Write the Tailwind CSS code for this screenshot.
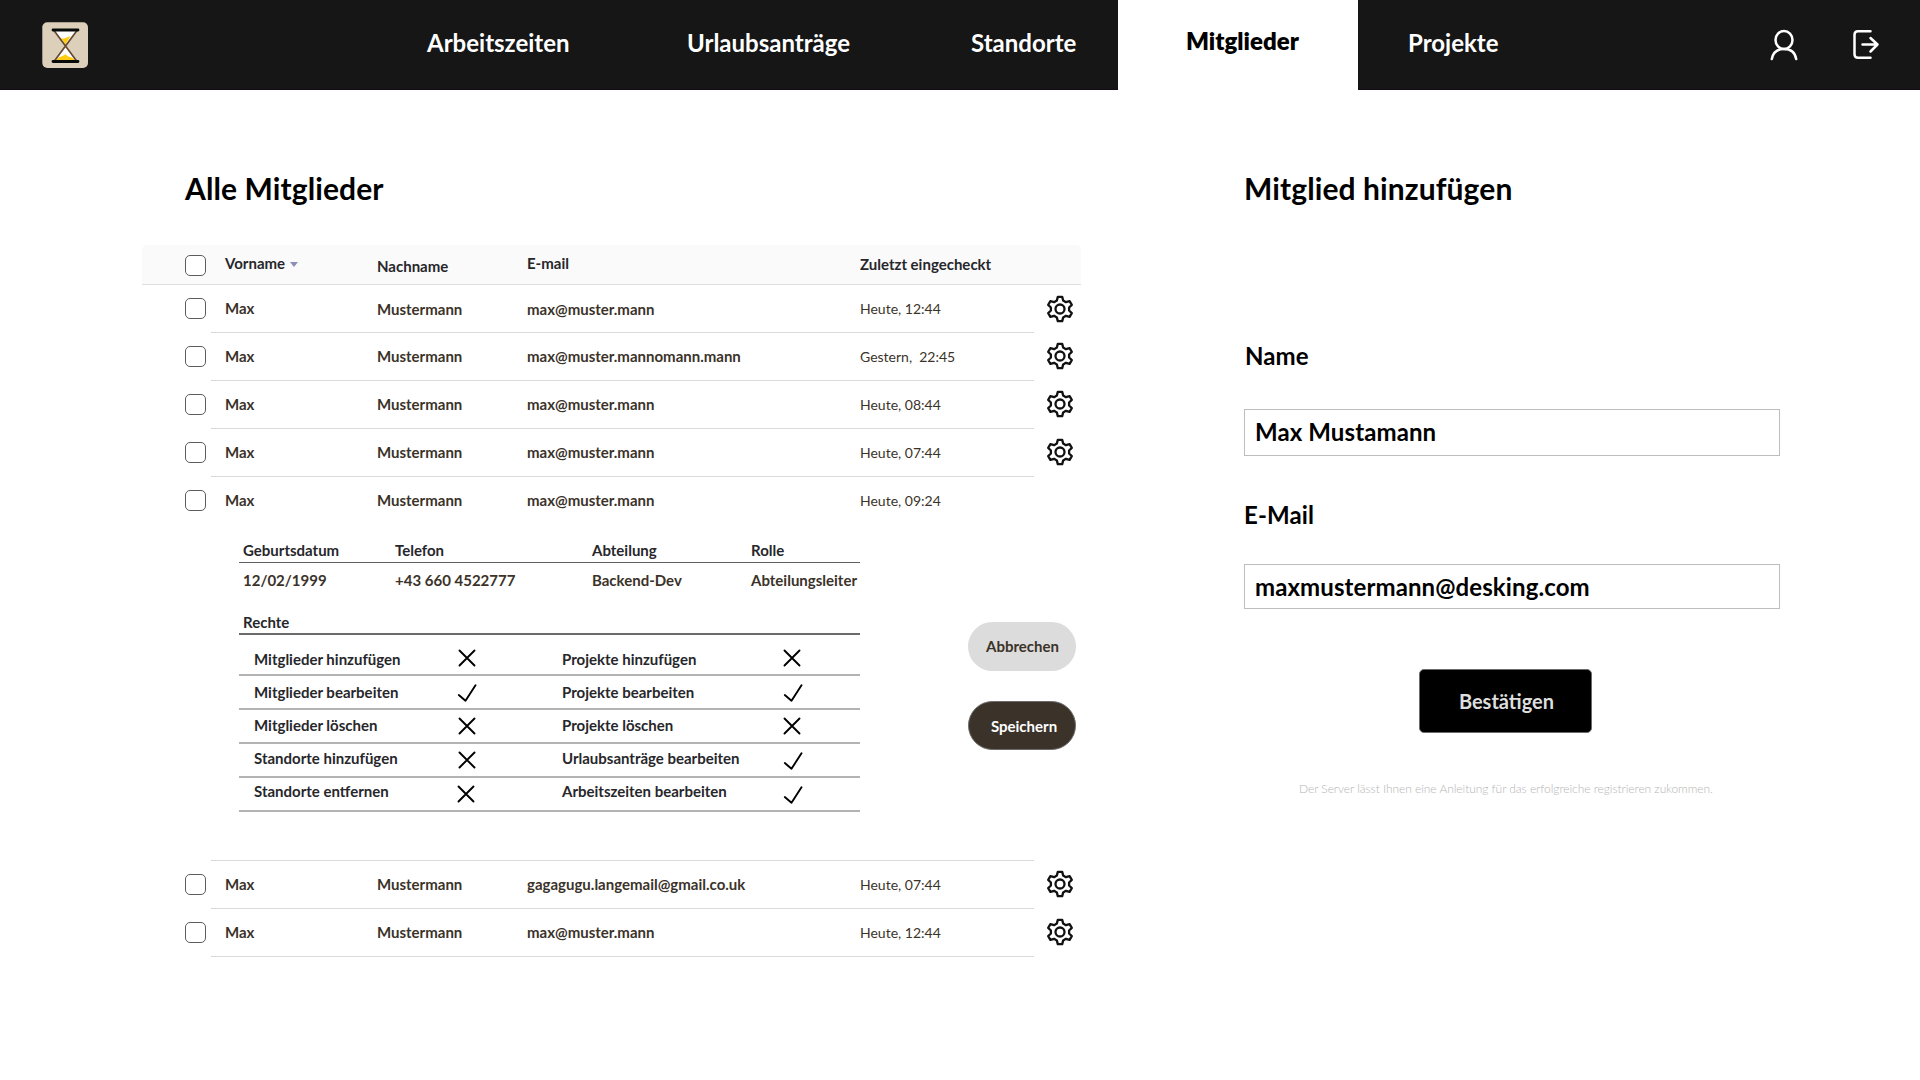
<!DOCTYPE html>
<html lang="de">
<head>
<meta charset="utf-8">
<title>Mitglieder</title>
<script src="https://cdn.jsdelivr.net/npm/@tailwindcss/browser@4"></script>
</head>
<body class="h-[1080px] w-[1920px] overflow-hidden bg-white font-['Lato',sans-serif] text-black">
<svg class="hidden">
  <symbol id="gear" viewBox="0 0 28 28"><g fill="none" stroke="#111" stroke-width="2.300" stroke-linejoin="round"><path d="M11.8 1.9h4.4l1 3.7 2.7 1.6 3.7-1.1 2.2 3.8-2.7 2.6v3l2.7 2.6-2.2 3.8-3.7-1.1-2.7 1.6-1 3.7h-4.4l-1-3.7-2.7-1.6-3.7 1.1-2.2-3.8 2.7-2.6v-3L2.200 9.900l2.200-3.800 3.700 1.100 2.700-1.600z"/><circle cx="14" cy="14" r="4.500"/></g></symbol>
  <symbol id="cross" viewBox="0 0 18 18"><path d="M1.500 1.500l15 15M16.500 1.500l-15 15" fill="none" stroke="#000" stroke-width="1.900" stroke-linecap="round"/></symbol>
  <symbol id="check" viewBox="0 0 20 18"><path d="M1.800 11l6.700 5.700L18.500 1.300" fill="none" stroke="#000" stroke-width="1.900" stroke-linecap="round" stroke-linejoin="round"/></symbol>
</svg>

<header class="flex h-[90px] border-b border-[#140c14] bg-[#161616] text-2xl font-bold text-white">
  <div class="w-[427px] pl-[42px] pt-[22px]">
    <svg class="h-[46px] w-[46px]" viewBox="0 0 46 46">
      <rect x=".3" y=".3" width="45.700" height="45.700" rx="5" fill="#dcd0bb"/>
      <path d="M12 9h23L23.500 24zM23.500 24L35 39H12z" fill="#fff"/>
      <path d="M19 16q3 1.200 5.200-.3l4.300-1.700-5 8.500zM14 38q3-3.500 6.500-4l2.700-1.800 3.300 2.300q4 .5 6.500 3.500z" fill="#fc1"/>
      <path d="M12 8.500l23 31M35 8.500l-23 31" stroke="#654731" stroke-width="1.700"/>
      <path d="M11 8h25M11 39.500h25" stroke="#060a08" stroke-width="2.800" stroke-linecap="round"/>
    </svg>
  </div>
  <nav class="flex w-[1342px] leading-[86px]">
    <a class="w-[260px]">Arbeitszeiten</a>
    <a class="w-[284px]">Urlaubsanträge</a>
    <a class="w-[147px]">Standorte</a>
    <a class="h-[90px] w-[240px] bg-white pl-[68px] font-extrabold leading-[82px] text-black">Mitglieder</a>
    <a class="pl-[50px]">Projekte</a>
  </nav>
  <svg class="mt-[29px] h-[32px] w-[30px]" viewBox="0 0 30 32" fill="none" stroke="#fff" stroke-width="2.500" stroke-linecap="round"><ellipse cx="15" cy="11" rx="8.500" ry="9"/><path d="M2.800 30C4 23 9 20 15 20s11 3 12.200 10"/></svg>
  <svg class="ml-[53px] mt-[29px] h-[32px] w-[28px]" viewBox="0 0 28 32" fill="none" stroke="#fff" stroke-width="2.500" stroke-linecap="round" stroke-linejoin="round"><path d="M18.500 2.300H6q-3.500 0-3.500 3.500v19.400q0 3.500 3.500 3.500h12.500M10.500 15.500h15M18.500 9l7 6.500-7 7"/></svg>
</header>

<main class="flex">
  <section class="w-[1102px] pl-[142px] pt-20">
    <h1 class="pl-[43px] text-[30px] font-bold leading-9 tracking-[0.1px]">Alle Mitglieder</h1>

    <div class="mt-[39px] w-[939px] text-[15px] font-bold text-[#3b3329]">
      <div class="grid h-10 grid-cols-[40px_152px_150px_333px_1fr] rounded-t-[5px] border-b border-[#dedede] bg-[#fafafa] pl-[43px] leading-5 text-[#27272b]">
        <i class="mt-[10px] size-[21px] rounded-[5px] border border-[#5c5c5c] bg-white"></i>
        <div class="flex items-center self-start pt-2">Vorname<svg class="ml-[5px] mt-[3px] h-[5px] w-2" viewBox="0 0 8 5"><path d="M0 0h8L4 5z" fill="#8b8fb3"/></svg></div>
        <div class="pt-[11px]">Nachname</div><div class="pt-2">E-mail</div><div class="pt-[9px]">Zuletzt eingecheckt</div>
      </div>

      <div class="grid h-[47px] grid-cols-[40px_152px_150px_333px_186px_28px] items-center pl-[43px]">
        <i class="size-[21px] rounded-[5px] border border-[#5c5c5c]"></i><span>Max</span><span class="pt-[2px]">Mustermann</span><span class="pt-[2px]">max@muster.mann</span><span class="text-sm font-normal">Heute, 12:44</span><svg class="size-7"><use href="#gear"/></svg>
      </div>
      <div class="ml-[69px] h-px w-[823px] bg-[#d9d9d9]"></div>
      <div class="grid h-[47px] grid-cols-[40px_152px_150px_333px_186px_28px] items-center pl-[43px]">
        <i class="size-[21px] rounded-[5px] border border-[#5c5c5c]"></i><span>Max</span><span>Mustermann</span><span>max@muster.mannomann.mann</span><span class="whitespace-pre text-sm font-normal">Gestern,  22:45</span><svg class="-mt-px size-7"><use href="#gear"/></svg>
      </div>
      <div class="ml-[69px] h-px w-[823px] bg-[#d9d9d9]"></div>
      <div class="grid h-[47px] grid-cols-[40px_152px_150px_333px_186px_28px] items-center pl-[43px]">
        <i class="size-[21px] rounded-[5px] border border-[#5c5c5c]"></i><span>Max</span><span>Mustermann</span><span>max@muster.mann</span><span class="text-sm font-normal">Heute, 08:44</span><svg class="-mt-px size-7"><use href="#gear"/></svg>
      </div>
      <div class="ml-[69px] h-px w-[823px] bg-[#d9d9d9]"></div>
      <div class="grid h-[47px] grid-cols-[40px_152px_150px_333px_186px_28px] items-center pl-[43px]">
        <i class="size-[21px] rounded-[5px] border border-[#5c5c5c]"></i><span>Max</span><span>Mustermann</span><span>max@muster.mann</span><span class="text-sm font-normal">Heute, 07:44</span><svg class="-mt-px size-7"><use href="#gear"/></svg>
      </div>
      <div class="ml-[69px] h-px w-[823px] bg-[#d9d9d9]"></div>
      <div class="grid h-[47px] grid-cols-[40px_152px_150px_333px_1fr] items-center pl-[43px]">
        <i class="size-[21px] rounded-[5px] border border-[#5c5c5c]"></i><span>Max</span><span>Mustermann</span><span>max@muster.mann</span><span class="text-sm font-normal">Heute, 09:24</span>
      </div>

      <div class="flex h-[336px] pl-[97px] pt-4 leading-5 text-[#27272b]">
        <div class="w-[621px]">
          <div class="grid h-[23px] grid-cols-[152px_197px_159px_1fr] border-b border-[#5f5f5f] pl-1"><span>Geburtsdatum</span><span>Telefon</span><span>Abteilung</span><span>Rolle</span></div>
          <div class="grid h-[49px] grid-cols-[152px_197px_159px_1fr] pl-1 pt-[7px] text-[#3b3329]"><span>12/02/1999</span><span>+43 660 4522777</span><span>Backend-Dev</span><span>Abteilungsleiter</span></div>
          <div class="h-[23px] border-b-2 border-[#6b6b6b] pl-1">Rechte</div>
          <div class="grid h-[41px] grid-cols-[204px_104px_221px_1fr] items-start border-b-2 border-[#b3b3b3] pl-[15px] pt-[14px]"><span>Mitglieder hinzufügen</span><svg class="size-[18px]"><use href="#cross"/></svg><span>Projekte hinzufügen</span><svg class="size-[18px]"><use href="#cross"/></svg></div>
          <div class="grid h-[34px] grid-cols-[203px_105px_221px_1fr] items-start border-b-2 border-[#b3b3b3] pl-[15px] pt-1.5"><span>Mitglieder bearbeiten</span><svg class="mt-[2px] h-[18px] w-5"><use href="#check"/></svg><span>Projekte bearbeiten</span><svg class="mt-[2px] h-[18px] w-5"><use href="#check"/></svg></div>
          <div class="grid h-[34px] grid-cols-[204px_104px_221px_1fr] items-start border-b-2 border-[#b3b3b3] pl-[15px] pt-[5px]"><span>Mitglieder löschen</span><svg class="mt-[2px] size-[18px]"><use href="#cross"/></svg><span>Projekte löschen</span><svg class="mt-[2px] size-[18px]"><use href="#cross"/></svg></div>
          <div class="grid h-[34px] grid-cols-[204px_104px_221px_1fr] items-start border-b-2 border-[#b3b3b3] pl-[15px] pt-1"><span>Standorte hinzufügen</span><svg class="mt-[3px] size-[18px]"><use href="#cross"/></svg><span>Urlaubsanträge bearbeiten</span><svg class="mt-[4px] h-[18px] w-5"><use href="#check"/></svg></div>
          <div class="grid h-[34px] grid-cols-[203px_105px_221px_1fr] items-start border-b-2 border-[#b3b3b3] pl-[15px] pt-[3px]"><span>Standorte entfernen</span><svg class="mt-1 size-[18px]"><use href="#cross"/></svg><span>Arbeitszeiten bearbeiten</span><svg class="mt-[5px] h-[18px] w-5"><use href="#check"/></svg></div>
        </div>
        <div class="ml-[108px] flex w-[108px] flex-col gap-[30px] pt-[82px]">
          <button class="h-[49px] rounded-full bg-[#dcdcdc] pb-px pl-px text-[#3b3329]">Abbrechen</button>
          <button class="h-[49px] rounded-full border border-[#6b6b6b] bg-[#3b3329] pl-[4px] text-white">Speichern</button>
        </div>
      </div>

      <div class="ml-[69px] h-px w-[823px] bg-[#d9d9d9]"></div>
      <div class="grid h-[47px] grid-cols-[40px_152px_150px_333px_186px_28px] items-center pl-[43px]">
        <i class="size-[21px] rounded-[5px] border border-[#5c5c5c]"></i><span>Max</span><span>Mustermann</span><span>gagagugu.langemail@gmail.co.uk</span><span class="text-sm font-normal">Heute, 07:44</span><svg class="-mt-px size-7"><use href="#gear"/></svg>
      </div>
      <div class="ml-[69px] h-px w-[823px] bg-[#d9d9d9]"></div>
      <div class="grid h-[47px] grid-cols-[40px_152px_150px_333px_186px_28px] items-center pl-[43px]">
        <i class="size-[21px] rounded-[5px] border border-[#5c5c5c]"></i><span>Max</span><span>Mustermann</span><span>max@muster.mann</span><span class="text-sm font-normal">Heute, 12:44</span><svg class="-mt-px size-7"><use href="#gear"/></svg>
      </div>
      <div class="ml-[69px] h-px w-[823px] bg-[#d9d9d9]"></div>
    </div>
  </section>

  <section class="flex w-[678px] flex-col pl-[142px] pt-20 text-2xl font-bold tracking-[0.1px]">
    <h2 class="text-[30px] leading-9">Mitglied hinzufügen</h2>
    <label class="mt-[134px] pl-px leading-8">Name</label>
    <div class="mt-[37px] h-[47px] border border-[#bdbdbd] pl-[10px] leading-[43px]">Max Mustamann</div>
    <label class="mt-[43px] leading-8">E-Mail</label>
    <div class="mt-[33px] h-[45px] border border-[#bdbdbd] pl-[10px] leading-[43px]">maxmustermann@desking.com</div>
    <button class="ml-[175px] mt-[60px] h-[64px] w-[173px] rounded-[5px] border border-[#6b6b6b] bg-black pl-[2px] text-xl font-bold tracking-normal text-[#dedede]">Bestätigen</button>
    <p class="ml-[55px] mt-[47px] whitespace-nowrap text-[12px] font-light leading-[18px] tracking-[-0.05px] text-[#b5b5b5]">Der Server lässt Ihnen eine Anleitung für das erfolgreiche registrieren zukommen.</p>
  </section>
</main>
</body>
</html>
